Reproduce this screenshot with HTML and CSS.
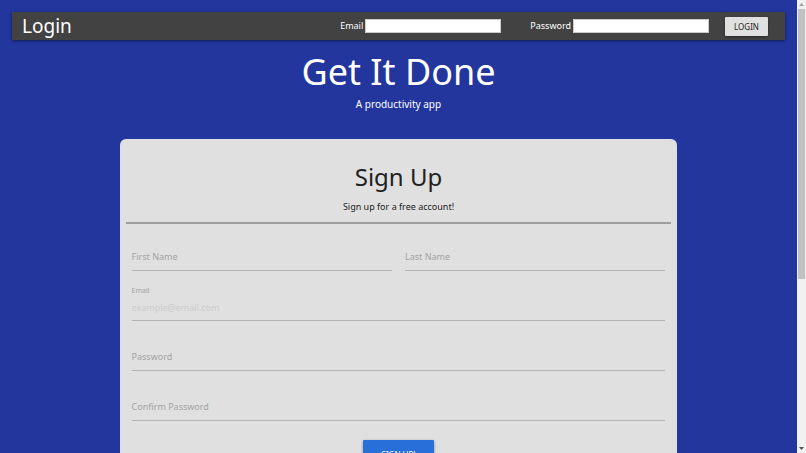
FILE: index.html
```
<!DOCTYPE html>
<html lang="en">
<head>
    <meta charset="UTF-8">
    <meta name="viewport" content="width=device-width, initial-scale=1.0">
    <title>Get It Done</title>
    <link rel="stylesheet" href="styles.css">
</head>
<body>

<div class="page">
    <nav class="navbar">
        <h2 class="navbar-title">Login</h2>
        <form class="login-form">
            <div class="login-field">
                <label for="login-email">Email</label>
                <input type="email" id="login-email">
            </div>
            <div class="login-field">
                <label for="login-password">Password</label>
                <input type="password" id="login-password">
            </div>
            <button type="submit" class="btn btn-login">LOGIN</button>
        </form>
    </nav>

    <header class="hero">
        <h1>Get It Done</h1>
        <p>A productivity app</p>
    </header>

    <main class="card">
        <div class="card-header">
            <h2>Sign Up</h2>
            <p>Sign up for a free account!</p>
        </div>
        <form class="signup-form">
            <div class="row">
                <div class="field">
                    <label for="first-name">First Name</label>
                    <input type="text" id="first-name">
                </div>
                <div class="field">
                    <label for="last-name">Last Name</label>
                    <input type="text" id="last-name">
                </div>
            </div>
            <div class="field active">
                <label for="email">Email</label>
                <input type="email" id="email" placeholder="example@email.com">
            </div>
            <div class="field">
                <label for="password">Password</label>
                <input type="password" id="password">
            </div>
            <div class="field">
                <label for="confirm-password">Confirm Password</label>
                <input type="password" id="confirm-password">
            </div>
            <button type="submit" class="btn btn-signup">SIGN UP!</button>
        </form>
    </main>
</div>

<div class="scrollbar" aria-hidden="true">
    <svg class="arrow" viewBox="0 0 9 9"><path d="M2 6L4.5 3L7 6Z" fill="#a3a3a3"/></svg>
    <div class="track"><div class="thumb"></div></div>
    <svg class="arrow" viewBox="0 0 9 9"><path d="M2 3L4.5 6L7 3Z" fill="#505050"/></svg>
</div>

</body>
</html>
```
FILE: styles.css
```
* {
    box-sizing: border-box;
}
body {
    display: flex;
    height: 100vh;
    margin: 0;
    overflow: hidden;
    font-family: 'Noto Sans', sans-serif;
    font-size: 9px;
    line-height: 14px;
    color: #212121;
    background-color: #23369e;
}
h1, h2, p {
    margin: 0;
    font-weight: normal;
}
input, button {
    font-family: inherit;
}
.page {
    flex: 1;
    overflow-y: auto;
    scrollbar-width: none;
}

/* Navbar */
.navbar {
    display: flex;
    align-items: center;
    justify-content: space-between;
    height: 28px;
    margin: 12px 12px 0;
    padding: 0 17px 0 10px;
    color: white;
    background-color: #424242;
    box-shadow: 0 1px 3px rgba(0, 0, 0, 0.5);
}
.navbar-title {
    font-size: 19px;
    line-height: 28px;
}
.login-form {
    display: flex;
    align-items: center;
}
.login-field {
    display: flex;
    align-items: center;
    gap: 2px;
    margin-right: 29px;
}
.login-field:nth-child(2) {
    margin-right: 16px;
}
.login-field input {
    width: 136px;
    height: 14px;
    padding: 1px 2px;
    border: 1px solid #ccc;
    font-size: 9px;
    background-color: white;
}

/* Buttons */
.btn {
    border: none;
    border-radius: 1px;
    padding: 0;
    font-size: 8px;
    text-align: center;
    cursor: pointer;
    box-shadow: 0 1px 3px rgba(0, 0, 0, 0.4);
}
.btn-login {
    width: 43px;
    height: 19px;
    color: #212121;
    background-color: #e0e0e0;
}
.btn-signup {
    display: block;
    width: 71px;
    height: 28px;
    margin: 19px auto 24px;
    color: white;
    background-color: #296fd9;
}

/* Hero */
.hero {
    padding: 8px 0 27px;
    text-align: center;
    color: white;
}
.hero h1 {
    font-size: 36px;
    line-height: 48px;
}
.hero p {
    font-size: 10px;
    line-height: 16px;
}

/* Sign up card */
.card {
    width: 70%;
    margin: 0 auto 40px;
    padding: 6px;
    border-radius: 6px;
    background-color: #e0e0e0;
}
.card-header {
    padding: 12px 0 8px;
    text-align: center;
    border-bottom: 2px solid #9e9e9e;
}
.card-header h2 {
    font-size: 24px;
    line-height: 40px;
    margin-bottom: 3px;
}
.signup-form {
    padding: 0 6px;
}
.row {
    display: grid;
    grid-template-columns: 1fr 1fr;
    gap: 13px;
}
/* label and input share one cell so the label can rest on the line */
.field {
    display: grid;
    height: 50px;
}
.row .field {
    height: 47px;
}
.field label {
    grid-area: 1 / 1;
    align-self: end;
    justify-self: start;
    z-index: 1;
    margin-bottom: 7px;
    color: #a3a3a3;
    cursor: text;
}
.field.active label {
    align-self: start;
    margin: 13px 0 0;
    font-size: 7px;
}
.field input {
    grid-area: 1 / 1;
    align-self: end;
    width: 100%;
    height: 26px;
    padding: 0;
    border: none;
    border-bottom: 1px solid #b4b4b4;
    outline: none;
    font-size: 9px;
    background-color: transparent;
}
.field input::placeholder {
    color: #cccccc;
}

/* Scrollbar */
.scrollbar {
    display: flex;
    flex-direction: column;
    width: 9px;
    background-color: #f1f1f1;
}
.arrow {
    width: 9px;
    height: 9px;
}
.track {
    flex: 1;
    padding: 0 1px;
}
.thumb {
    height: 62%;
    background-color: #c1c1c1;
}
```
